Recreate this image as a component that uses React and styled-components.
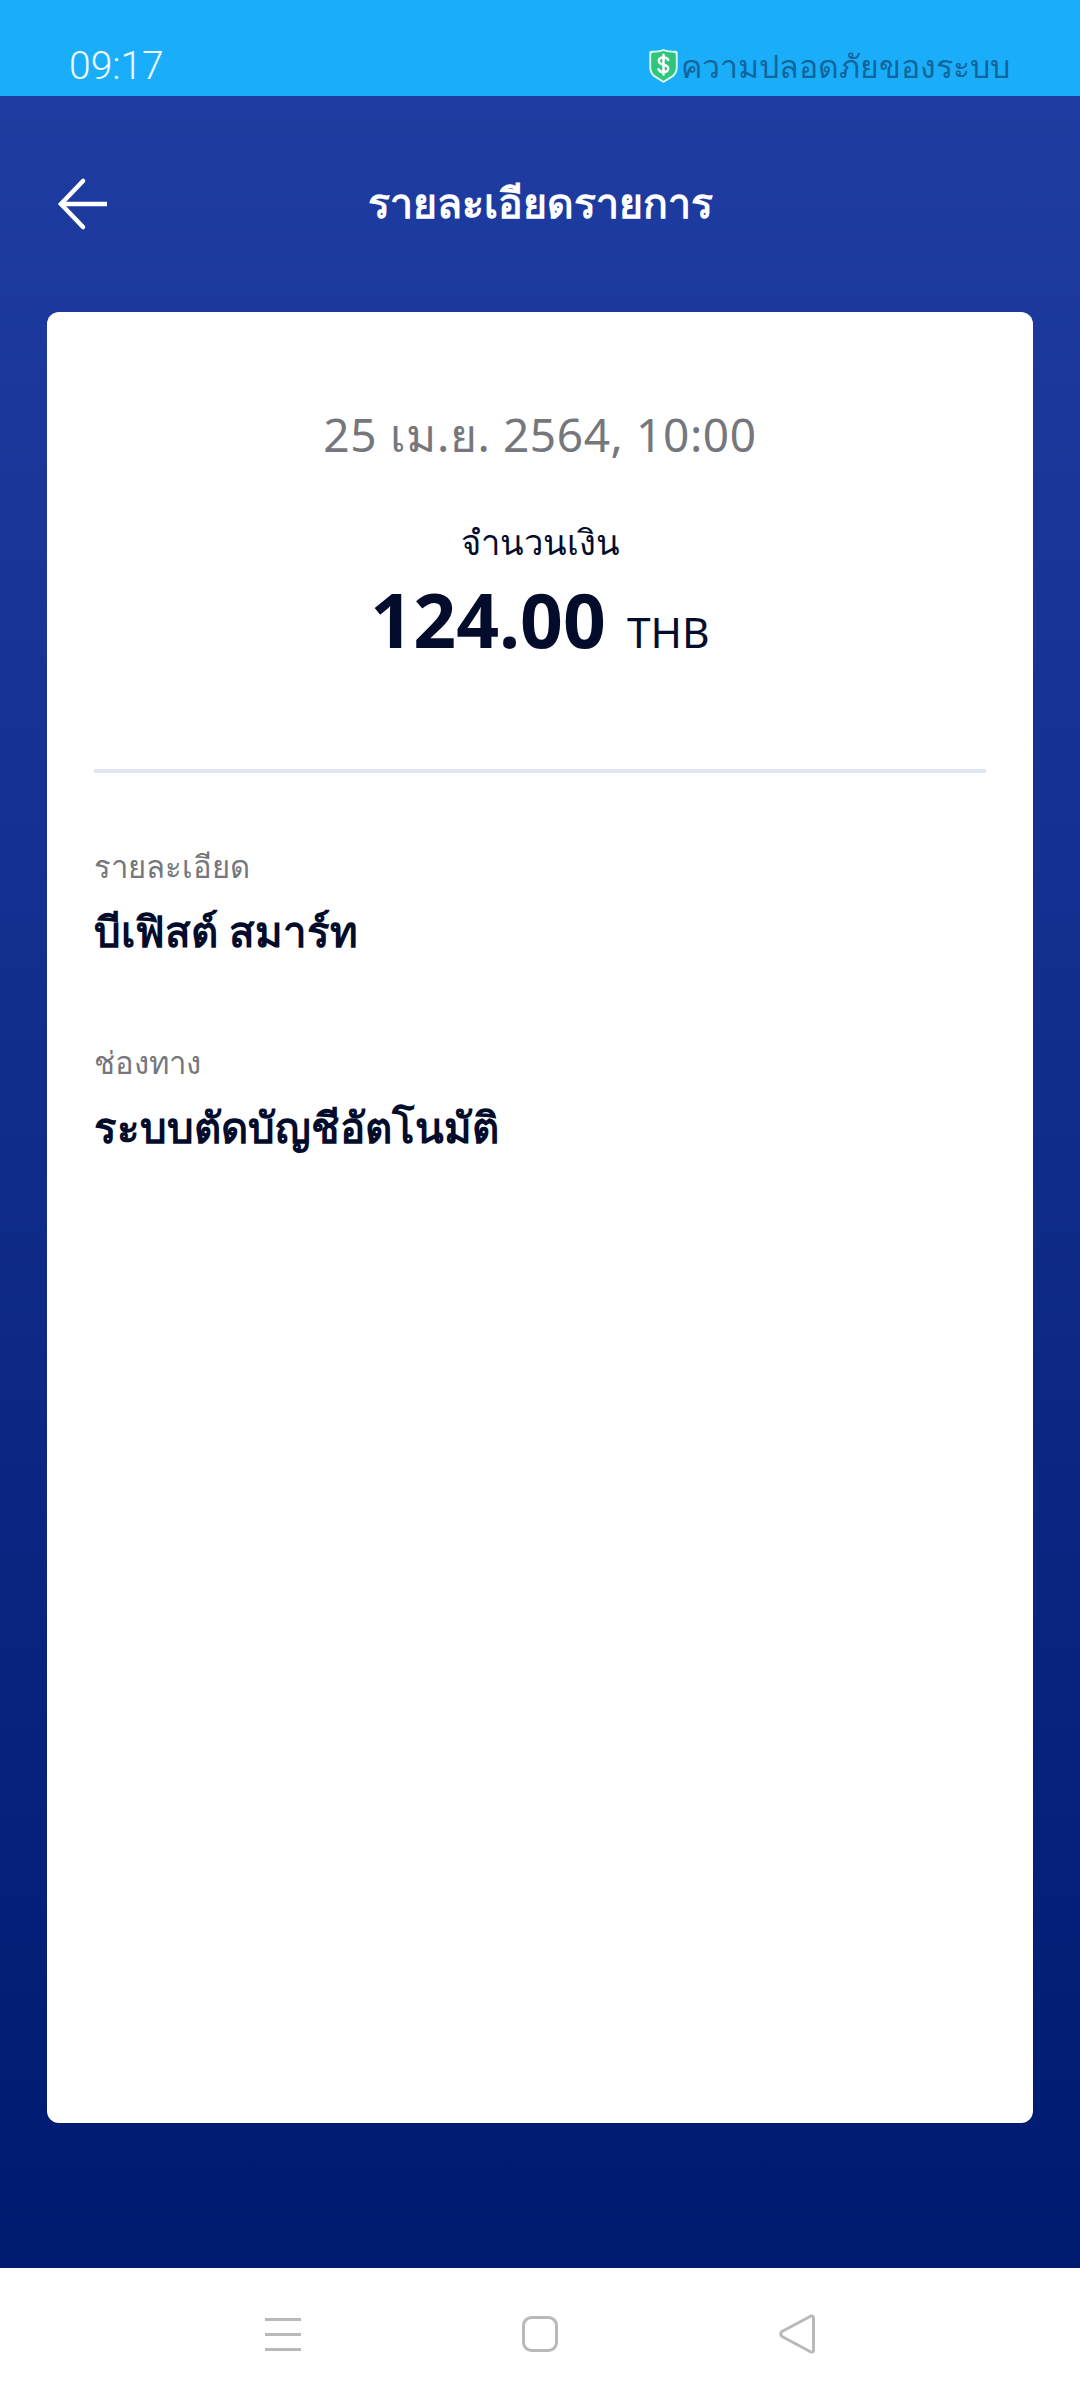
import React from "react";
import styled, { createGlobalStyle } from "styled-components";

const Global = createGlobalStyle`
  html, body { margin: 0; padding: 0; background: #fff; }
  body { font-family: "Noto Sans", "Open Sans", sans-serif; }
  * { box-sizing: border-box; }
`;
const Screen = styled.div`
  width: 1080px; height: 2400px; display: flex; flex-direction: column; overflow: hidden;
`;
const StatusBar = styled.div`
  height: 96px; flex: none; background: #1aaefa; display: flex; align-items: flex-end;
  justify-content: space-between; padding: 0 70px 8px 69px;
`;
const Time = styled.span`
  font-size: 39px; line-height: 44px; color: #f2fbff; font-family: Roboto, sans-serif; font-weight: 300;
`;
const Safety = styled.div`
  display: flex; align-items: center; gap: 2px; color: #11659c; font-size: 32px; line-height: 44px;
`;
const Main = styled.main`
  flex: 1; display: flex; flex-direction: column; padding: 0 47px 145px;
  background: linear-gradient(180deg, #1f3ca2 0%, #001a70 100%);
`;
const Header = styled.header`
  height: 216px; flex: none; display: grid; grid-template-columns: 80px 1fr 80px; align-items: center;
`;
const BackButton = styled.button`
  border: 0; background: none; padding: 0; width: 64px; height: 60px; margin: 0 0 0 8px; display: block;
`;
const Title = styled.h1`
  margin: -4px 0 0; text-align: center; color: #fff; font-size: 41px; font-weight: 700; line-height: 60px;
`;
const Card = styled.section`
  flex: 1; background: #fff; border-radius: 12px; padding: 92px 47px 0;
`;
const Summary = styled.div`
  text-align: center; border-bottom: 4px solid #e1e6f4; height: 369px;
`;
const DateText = styled.div`
  color: #75777d; font-size: 46px; line-height: 60px; letter-spacing: 0.6px;
`;
const AmountLabel = styled.div`
  margin-top: 53px; color: #040c2c; font-size: 34.5px; line-height: 50px;
`;
const Amount = styled.div`
  color: #040c2c; display: flex; justify-content: center; align-items: baseline; gap: 21px; line-height: 80px; margin-top: 12px;
`;
const Value = styled.span`
  font-size: 75px; font-weight: 700;
`;
const Currency = styled.span`
  font-size: 42.5px;
`;
const Detail = styled.div`
  margin-top: ${p => p.$first ? "70px" : "78px"};
`;
const DetailLabel = styled.div`
  color: #75777d; font-size: 31px; line-height: 46px;
`;
const DetailValue = styled.div`
  color: #040c2c; font-size: 42px; font-weight: 700; line-height: 60px; margin-top: 12px;
`;
const NavBar = styled.nav`
  height: 132px; flex: none; background: #fff; display: flex; align-items: center; justify-content: center;
`;
const NavSlot = styled.div`
  width: 257px; display: flex; justify-content: center;
`;

const Shield = () => (
  <svg width="31" height="36" viewBox="0 0 32 38">
    <path d="M3 3 C8 3 12 2.5 16 1 C20 2.5 24 3 29 3 Q31 3 31 5 V20 Q31 26 27 30 L16 37 L5 30 Q1 26 1 20 V5 Q1 3 3 3 Z" fill="#d6f7e6" />
    <path d="M5 5 C9 5 13 4.5 16 3.2 C19 4.5 23 5 27 5 Q29 5 29 7 V20 Q29 25 25.5 28.5 L16 34.5 L6.5 28.5 Q3 25 3 20 V7 Q3 5 5 5 Z" fill="#2fc57c" />
    <path d="M21 12.5 C20 10.5 18 10 16 10 C13 10 11 11.5 11 13.8 C11 19 21 16.5 21 21.5 C21 24 19 25.5 16 25.5 C13.5 25.5 11.5 24.5 10.7 22.5 M16 7.2 V28" fill="none" stroke="#fff" strokeWidth="2.6" strokeLinecap="round" />
  </svg>
);
const BackArrow = () => (
  <svg width="64" height="60" viewBox="0 0 64 60" fill="none" stroke="#fff" strokeWidth="4.5">
    <path d="M52 30 H8" />
    <path d="M28 7 L6 30 L28 53" strokeLinecap="round" />
  </svg>
);
const MenuIcon = () => (
  <svg width="36" height="35" viewBox="0 0 36 35" stroke="#b9b9b9" strokeWidth="3">
    <path d="M0 2.5 H36 M0 17.5 H36 M0 32.5 H36" />
  </svg>
);
const HomeIcon = () => (
  <svg width="36" height="36" viewBox="0 0 36 36" fill="none" stroke="#b9b9b9" strokeWidth="3">
    <rect x="1.5" y="1.5" width="33" height="33" rx="8" />
  </svg>
);
const BackTriangle = () => (
  <svg width="36" height="40" viewBox="0 0 36 40" fill="none" stroke="#b9b9b9" strokeWidth="3" strokeLinejoin="round">
    <path d="M31.5 2.2 Q34.5 1 34.5 4.5 V35.5 Q34.5 39 31.5 37.8 L3 22.5 Q0.5 20 3 17.5 Z" />
  </svg>
);

export default function App() {
  return (
    <>
      <Global />
      <Screen>
        <StatusBar>
          <Time>09:17</Time>
          <Safety><Shield />ความปลอดภัยของระบบ</Safety>
        </StatusBar>
        <Main>
          <Header>
            <BackButton aria-label="กลับ"><BackArrow /></BackButton>
            <Title>รายละเอียดรายการ</Title>
            <span />
          </Header>
          <Card>
            <Summary>
              <DateText>25 เม.ย. 2564, 10:00</DateText>
              <AmountLabel>จำนวนเงิน</AmountLabel>
              <Amount><Value>124.00</Value><Currency>THB</Currency></Amount>
            </Summary>
            <Detail $first>
              <DetailLabel>รายละเอียด</DetailLabel>
              <DetailValue>บีเฟิสต์ สมาร์ท</DetailValue>
            </Detail>
            <Detail>
              <DetailLabel>ช่องทาง</DetailLabel>
              <DetailValue>ระบบตัดบัญชีอัตโนมัติ</DetailValue>
            </Detail>
          </Card>
        </Main>
        <NavBar>
          <NavSlot><MenuIcon /></NavSlot>
          <NavSlot><HomeIcon /></NavSlot>
          <NavSlot><BackTriangle /></NavSlot>
        </NavBar>
      </Screen>
    </>
  );
}
